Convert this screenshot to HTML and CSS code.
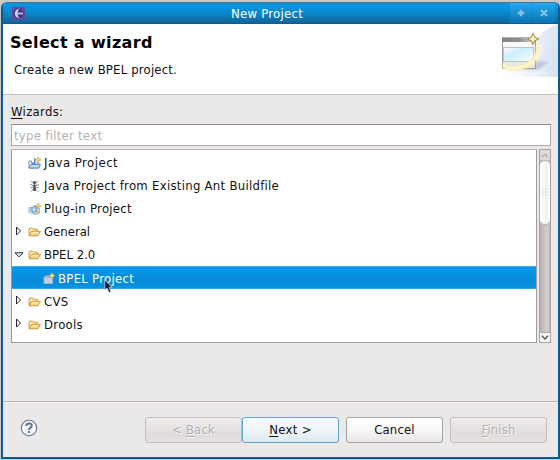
FILE: index.html
```html
<!DOCTYPE html>
<html lang="en">
<head>
<meta charset="utf-8">
<title>New Project</title>
<link rel="stylesheet" href="styles.css">
</head>
<body>
<svg width="0" height="0" class="defs">
  <defs>
    <linearGradient id="fold" x2="0" y2="1"><stop stop-color="#fff4bd"/><stop offset="1" stop-color="#f4c66c"/></linearGradient>
    <symbol id="folder" viewBox="0 0 13 12"><path d="M1 9.5V3L2 2H4.5L5.5 3.2H9.5V5" fill="#fce8a6" stroke="#d39c4c"/><path d="M1.2 9.8 3.5 5.3H12.4L10 9.8Z" fill="url(#fold)" stroke="#d09740"/></symbol>
    <symbol id="closed" viewBox="0 0 7 10"><path d="M1.5 1V9L5.5 5Z" fill="#fff" stroke="#222"/></symbol>
  </defs>
</svg>
<div class="window">
  <header class="titlebar">
    <svg class="app" width="13" height="13" viewBox="0 0 13 13"><rect width="13" height="13" fill="#5b4da6"/><circle cx="6.5" cy="6.5" r="5" fill="#42358b"/><path d="M7.5 1.8a4.7 4.7 0 1 0 0 9.4C5 9.5 5 3.5 7.5 1.8Z" fill="#d5d2e8"/><path d="M5 6.5H11" stroke="#b9b3da" stroke-width="2"/></svg>
    <h1>New Project</h1>
    <div class="controls">
      <span class="control"><svg width="8" height="8" viewBox="0 0 8 8"><path d="M4 .7V7.3M.7 4H7.3" stroke="#7fc2e6" stroke-width="2.4"/></svg></span>
      <span class="control"><svg width="8" height="8" viewBox="0 0 8 8"><path d="M1 1 7 7M7 1 1 7" stroke="#7fc2e6" stroke-width="2.4"/></svg></span>
    </div>
  </header>
  <section class="banner">
    <div>
      <h2>Select a wizard</h2>
      <p>Create a new BPEL project.</p>
    </div>
    <svg class="art" width="58" height="53" viewBox="0 0 58 53">
      <defs>
        <linearGradient id="sky" x1="0" x2="1"><stop offset=".1" stop-color="#fff"/><stop offset="1" stop-color="#dce5f5"/></linearGradient>
        <linearGradient id="head" x1="0" x2="1"><stop stop-color="#858585"/><stop offset=".5" stop-color="#8f8f96"/><stop offset="1" stop-color="#d9d9d4"/></linearGradient>
        <linearGradient id="pane" x1="0" x2="1" y2="1"><stop stop-color="#fafdff"/><stop offset=".4" stop-color="#cceefc"/><stop offset="1" stop-color="#fbffff"/></linearGradient>
        <linearGradient id="base" x2="0" y2="1"><stop stop-color="#fff"/><stop offset="1" stop-color="#e4e3df"/></linearGradient>
        <filter id="soft" x="-30%" y="-30%" width="160%" height="160%"><feGaussianBlur stdDeviation="1.2"/></filter>
      </defs>
      <path d="M58 0C48 4 40 8 38 16L0 46V53H58Z" fill="url(#sky)"/>
      <path d="M58 17C47 21 41 29 37 43L58 53Z" fill="#d6e0f3" opacity=".4"/>
      <path d="M5 46H38L49 38 36 37Z" fill="#aaaebf" opacity=".55" filter="url(#soft)"/>
      <rect x="2.5" y="13.5" width="33" height="31" fill="url(#base)" stroke="#a2a29b"/>
      <rect x="2" y="13" width="33" height="5" fill="url(#head)"/>
      <path d="M3 13.5H29" stroke="#b5b5b5"/>
      <rect x="3.5" y="23.5" width="30" height="14" fill="url(#pane)" stroke="#bfc3c3"/>
      <path d="M3 41C9 49 39 45 39 21" fill="none" stroke="#fff7c2" stroke-width="4" filter="url(#soft)"/>
      <path d="M4 42C12 48 38 42 39 21" fill="none" stroke="#fff6c8" stroke-width="2" opacity=".7"/>
      <path d="M22 41Q35 36 38 23" fill="none" stroke="#f5dc91" stroke-width="1.5" stroke-dasharray="1.5 2"/>
      <path d="M33 9.5 34.9 13.3 38.5 15 34.9 16.8 33 20.5 31.1 16.8 27.5 15 31.1 13.3Z" fill="#fffdf0" stroke="#b9902f" stroke-width="1.2"/>
    </svg>
  </section>
  <main>
    <label class="caption" for="filter"><u>W</u>izards:</label>
    <input id="filter" class="filter" type="text" placeholder="type filter text">
    <div class="list">
      <ul class="tree">
        <li class="wide"><i class="twist"></i><svg width="13" height="12" viewBox="0 0 13 12"><path d="M1 11V4H3.5V6H11V11Z" fill="#fff" stroke="#6b95c4"/><path d="M1 11 3 7.5H12.5L10.5 11Z" fill="#c2dcf5" stroke="#5b89c2"/><path d="M6.8 1V5Q6.5 7 4 6" fill="none" stroke="#4b7db4" stroke-width="1.3"/><path d="M10.3 .3V5.3M7.8 2.8H12.8" stroke="#cfa042" stroke-width="1.8"/><path d="M10.3 1.5V4.1M9 2.8H11.6" stroke="#fff0ae" stroke-width=".8"/></svg><span>Java Project</span></li>
        <li><i class="twist"></i><svg width="13" height="12" viewBox="0 0 13 12"><g stroke="#777" fill="none"><path d="M3 1 6.5 4 10 1M2 4.5 6.5 6 11 4.5M2.5 8 6.5 6.5 10.5 8M3 11.5 6.5 8 10 11.5" stroke-width=".9"/></g><ellipse cx="6.5" cy="2.5" rx="1.5" ry="1.5" fill="#555"/><ellipse cx="6.5" cy="5.5" rx="1.2" ry="1.6" fill="#555"/><ellipse cx="6.5" cy="9" rx="1.6" ry="2.2" fill="#555"/></svg><span>Java Project from Existing Ant Buildfile</span></li>
        <li><i class="twist"></i><svg width="13" height="12" viewBox="0 0 13 12"><path d="M1 4.5H5L6 2.5H8V5H11.5V10L8 11.5 1 9.5Z" fill="#c4daef" stroke="#9fb8d2"/><circle cx="6" cy="6.5" r="3" fill="#96bade" stroke="#6f98c5" stroke-dasharray="1.5 1"/><circle cx="6" cy="6.5" r="1" fill="#fff"/><path d="M10.3 .3V5.3M7.8 2.8H12.8" stroke="#cfa042" stroke-width="1.8"/><path d="M10.3 1.5V4.1M9 2.8H11.6" stroke="#fff0ae" stroke-width=".8"/><path d="M8 9.2H12" stroke="#ddb767" stroke-width="2"/></svg><span>Plug-in Project</span></li>
        <li class="tight"><i class="twist"><svg width="7" height="10"><use href="#closed"/></svg></i><svg width="13" height="12"><use href="#folder"/></svg><span>General</span></li>
        <li class="tight"><i class="twist"><svg class="open" width="10" height="6" viewBox="0 0 10 6"><path d="M1 .8H9L5 4.8Z" fill="#fff" stroke="#222"/></svg></i><svg width="13" height="12"><use href="#folder"/></svg><span>BPEL 2.0</span></li>
        <li class="child selected"><i class="twist"></i><svg width="12" height="12" viewBox="0 0 12 12"><path d="M1 4.5 2.5 3H6V4H9.5V10.5H1Z" fill="#c2d0e7" stroke="#a2b2d0"/><path d="M1 4.5H9" stroke="#c9a79f"/><path d="M9 0V5.4M6.3 2.7H11.7" stroke="#bda55a" stroke-width="2.2"/><path d="M9 .8V4.6M7.1 2.7H10.9" stroke="#fff2b0"/></svg><span>BPEL Project</span></li>
        <li><i class="twist"><svg width="7" height="10"><use href="#closed"/></svg></i><svg width="13" height="12"><use href="#folder"/></svg><span>CVS</span></li>
        <li class="tight"><i class="twist"><svg width="7" height="10"><use href="#closed"/></svg></i><svg width="13" height="12"><use href="#folder"/></svg><span class="drools">Drools</span></li>
      </ul>
      <div class="scrollbar">
        <div class="arrow up"><svg width="8" height="5" viewBox="0 0 8 5"><path d="M1 4.3 4 1.2 7 4.3" fill="none" stroke="#b5b1b1" stroke-width="1.4"/></svg></div>
        <div class="thumb"><svg width="7" height="9" viewBox="0 0 7 9"><path d="M1 .5V9M3.5 .5V9M6 .5V9" stroke="#c5c1c1" stroke-width="1" stroke-dasharray="1 2"/></svg></div>
        <div class="arrow down"><svg width="8" height="5" viewBox="0 0 8 5"><path d="M1 .8 4 3.9 7 .8" fill="none" stroke="#555" stroke-width="1.4"/></svg></div>
      </div>
    </div>
  </main>
  <footer>
    <svg class="help" width="18" height="18" viewBox="0 0 18 18"><circle cx="9" cy="9" r="7.7" fill="#f8f9fb" stroke="#647698" stroke-width="1.1"/><path d="M6.2 7Q6.2 4.4 9 4.4T11.8 6.8Q11.8 8.2 10 9.1Q9 9.6 9 11" fill="none" stroke="#5f7296" stroke-width="2"/><rect x="8" y="12" width="2" height="2" fill="#5f7296"/></svg>
    <button class="back" disabled><span>&lt; <u>B</u>ack</span></button>
    <button class="next"><span><u>N</u>ext &gt;</span></button>
    <button class="cancel"><span>Cancel</span></button>
    <button class="finish" disabled><span><u>F</u>inish</span></button>
  </footer>
</div>
<svg class="cursor" width="9" height="15" viewBox="0 0 9 15"><path d="M.7 .8V11L3 9 5 13.5 7 12.6 5 8.4H8Z" fill="#16182d" stroke="#d7e6f5" stroke-width=".7"/></svg>
</body>
</html>
```
FILE: styles.css
```css
* { box-sizing: border-box; }
body { margin: 0; width: 560px; height: 460px; overflow: hidden; background: #c8c8c7; padding: 2px 0 1px 1px; font: 13px/16px "DejaVu Sans Condensed", "DejaVu Sans", sans-serif; font-stretch: condensed; color: #111; }
.defs { position: absolute; }
.window { height: 457px; display: flex; flex-direction: column; border: 2px solid #075d91; border-top: 0; border-radius: 6px 6px 0 0; background: #ebe9e8; overflow: hidden; }
.titlebar { height: 22px; flex: none; margin: 0 -2px; display: flex; align-items: center; background: linear-gradient(#397b9f 0 1px, #0898e8 2px, #0788cd 50%, #146596 95%, #075783); }
.app { margin-left: 11px; flex: none; }
h1 { margin: 0; padding: 1px 1px 0 0; flex: 1; text-align: center; font-size: 13px; font-weight: 400; letter-spacing: .25px; color: #fff; }
.controls { display: flex; gap: 1px; padding-right: 5px; }
.control { width: 22px; height: 20px; display: grid; place-items: center; background: linear-gradient(#27a7ec, #0875b3); }
.banner { height: 71px; flex: none; display: flex; justify-content: space-between; background: #fff; border-bottom: 1px solid #c8c0c0; }
h2 { font: bold 16px/20px "DejaVu Sans", sans-serif; letter-spacing: .35px; margin: 9px 0 0 7px; color: #000; }
p { margin: 9px 0 0 11px; line-height: 16px; letter-spacing: .18px; }
main { padding: 8px 7px 0 8px; }
.caption { display: block; line-height: 18px; letter-spacing: .3px; }
u { text-decoration: underline; text-underline-offset: 2px; }
.filter { display: block; width: 540px; height: 22px; margin-top: 3px; padding: 0 2px; border: 1px solid #b5aaaa; border-top-color: #958b8b; background: #fff; font: inherit; letter-spacing: .28px; outline: 0; }
.filter::placeholder { color: #b4b1b1; opacity: 1; }
.list { display: flex; justify-content: space-between; margin-top: 3px; height: 194px; }
.tree { flex: none; list-style: none; margin: 0; padding: 0; width: 526px; border: 1px solid #a39a9a; border-top-color: #c2bbbb; background: #fff; overflow: hidden; letter-spacing: .28px; }
.tree li { height: 23.2px; display: flex; align-items: center; padding: 2px 0 0 3px; white-space: nowrap; }
.tree li > svg { margin-right: 3px; flex: none; }
.tree .wide { letter-spacing: .48px; }
.tree .tight { letter-spacing: 0; }
.tree .drools { letter-spacing: .3px; }
.twist { width: 13px; display: flex; height: 13px; }
.twist .open { margin: 3px 0 0 -1px; }
.tree .child { padding: 2px 0 0 18px; }
.tree .selected { color: #fff; background: linear-gradient(#45aae4 0 1px, #0798ec 1px, #078bd9 65%, #0692e3 95%, #52afe5); }
.scrollbar { flex: none; width: 12px; border: 1px solid #aaa1a1; background: linear-gradient(90deg, #b8b0b0, #d4cece 70%, #c2baba); display: flex; flex-direction: column; }
.arrow { height: 10px; flex: none; display: grid; place-items: center; background: #dedada; }
.arrow.down { margin-top: auto; background: #f8f7f7; border-top: 1px solid #aaa; }
.thumb { height: 65px; display: grid; place-items: center; border: 1px solid #bcb5b5; border-width: 1px 0; border-radius: 5px; background: linear-gradient(90deg, #fff, #f2f0f0 70%, #fff); }
footer { margin-top: auto; height: 56px; flex: none; border-top: 1px solid #bdb8b7; box-shadow: inset 0 1px #f6f5f5; display: flex; align-items: flex-start; padding: 15px 10px 0 17px; }
.help { margin-top: 2px; }
button { width: 97px; height: 26px; padding: 0; border: 1px solid #aaa5a5; border-radius: 3px; background: linear-gradient(#fff, #f8f7f7 50%, #e7e5e5); font: inherit; color: #111; letter-spacing: .15px; }
button:disabled { color: #b5b1b1; border-color: #c2bebe; background: linear-gradient(#efeeed, #dedbda 70%, #e5e3e2); text-shadow: 1px 1px #f9f9f9; }
.back { margin-left: 107px; }
.next { margin-left: 0; letter-spacing: .3px; border-color: #5ba5d0; background: linear-gradient(#f8fbfd, #eef5f9 50%, #dce7ed); }
.cancel, .finish { margin-left: 7px; }
.cursor { position: absolute; left: 104px; top: 279px; }
```
